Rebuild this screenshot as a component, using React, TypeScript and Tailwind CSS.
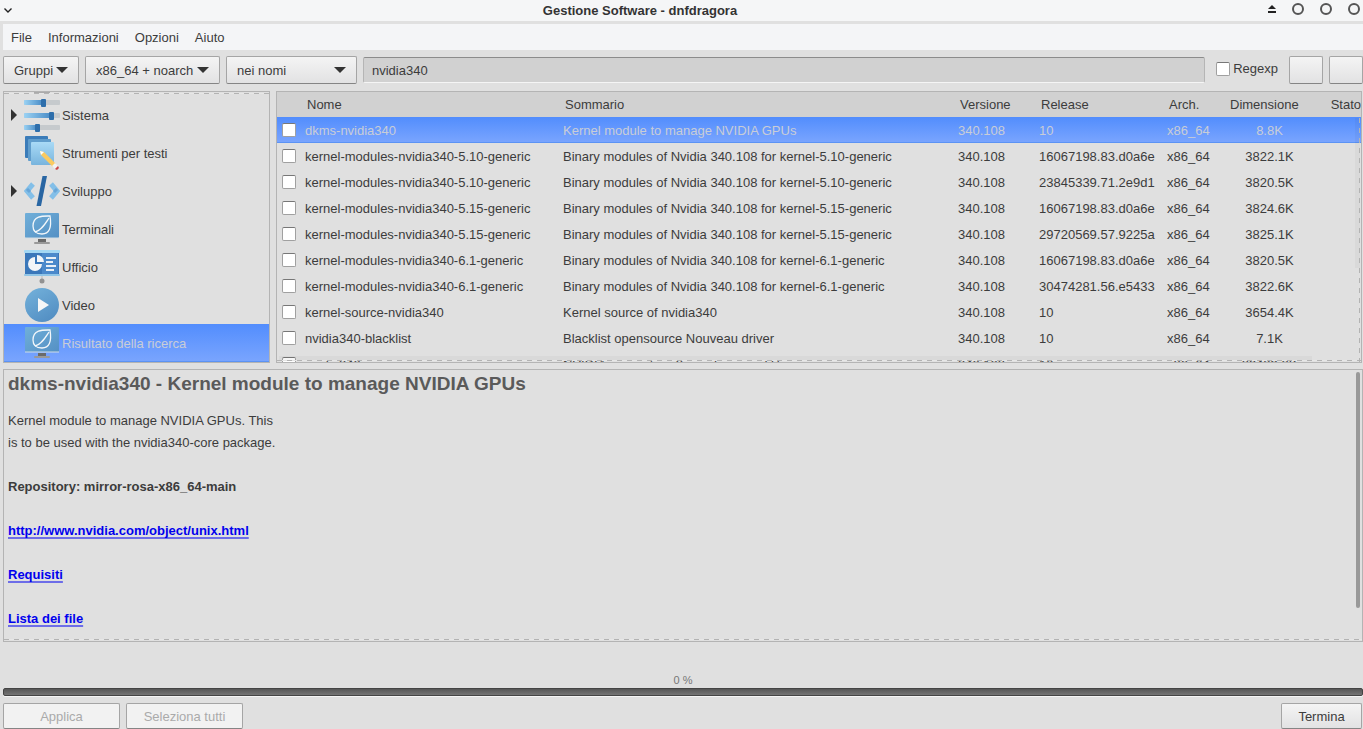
import type { ReactNode } from 'react';

const packages = [
  ['dkms-nvidia340', 'Kernel module to manage NVIDIA GPUs', '10', '8.8K'],
  ['kernel-modules-nvidia340-5.10-generic', 'Binary modules of Nvidia 340.108 for kernel-5.10-generic', '16067198.83.d0a6e', '3822.1K'],
  ['kernel-modules-nvidia340-5.10-generic', 'Binary modules of Nvidia 340.108 for kernel-5.10-generic', '23845339.71.2e9d1', '3820.5K'],
  ['kernel-modules-nvidia340-5.15-generic', 'Binary modules of Nvidia 340.108 for kernel-5.15-generic', '16067198.83.d0a6e', '3824.6K'],
  ['kernel-modules-nvidia340-5.15-generic', 'Binary modules of Nvidia 340.108 for kernel-5.15-generic', '29720569.57.9225a', '3825.1K'],
  ['kernel-modules-nvidia340-6.1-generic', 'Binary modules of Nvidia 340.108 for kernel-6.1-generic', '16067198.83.d0a6e', '3820.5K'],
  ['kernel-modules-nvidia340-6.1-generic', 'Binary modules of Nvidia 340.108 for kernel-6.1-generic', '30474281.56.e5433', '3822.6K'],
  ['kernel-source-nvidia340', 'Kernel source of nvidia340', '10', '3654.4K'],
  ['nvidia340-blacklist', 'Blacklist opensource Nouveau driver', '10', '7.1K'],
  ['nvidia340', 'NVIDIA proprietary X.org driver and libraries', '10', '39429.2K'],
];

const SlidersIcon = () => (
  <svg width="36" height="38" viewBox="0 0 36 38">
    <defs>
      <linearGradient id="track">
        <stop offset="0" stopColor="#9bd2f3" />
        <stop offset="1" stopColor="#4b8ec8" />
      </linearGradient>
    </defs>
    {[[4, 18], [17, 26], [29, 12]].map(([y, x]) => (
      <g key={y}>
        <rect x="0" y={y} width="36" height="5" rx="1" fill="#c6cacd" />
        <rect x="0" y={y} width={x} height="5" rx="1" fill="url(#track)" />
        <rect x={x - 1} y={y - 1} width="5" height="8" rx="1" fill="#2d6eab" />
      </g>
    ))}
  </svg>
);

const TextToolsIcon = () => (
  <svg width="36" height="38" viewBox="0 0 36 38">
    <defs>
      <linearGradient id="sheet" x2="0" y2="1">
        <stop offset="0" stopColor="#a9daf6" />
        <stop offset="1" stopColor="#78b4dd" />
      </linearGradient>
    </defs>
    <rect x="1" y="2" width="23" height="22" rx="1" fill="#3b7cb9" />
    <rect x="4" y="5" width="23" height="22" rx="1" fill="#609dcc" />
    <rect x="7" y="8" width="23" height="23" rx="1" fill="url(#sheet)" />
    <path d="M16 17 L20 18 L32 30 L29 33 L17 21 Z" fill="#fbca60" />
    <path d="M16 17 L20 18 L17 21 Z" fill="#fff" />
    <path d="M28 32 L31 29 L34 32 L31 35 Z" fill="#f2f2f2" />
    <path d="M31 35 L34 32 L35 34 L33 36 Z" fill="#ce4848" />
  </svg>
);

const CodeIcon = () => (
  <svg width="36" height="38" viewBox="0 0 36 38" fill="none">
    <path d="M9 12 L3 19 L9 26" stroke="#83bfe8" strokeWidth="5" />
    <path d="M27 12 L33 19 L27 26" stroke="#83bfe8" strokeWidth="5" />
    <path d="M3 17 L6 20 M33 17 L30 20" stroke="#68a6d8" strokeWidth="3" />
    <path d="M18.5 4 H23 L17 34 H12.5 Z" fill="#2966a3" />
  </svg>
);

const TerminalIcon = () => (
  <svg width="36" height="38" viewBox="0 0 36 38" fill="none">
    <defs>
      <linearGradient id="screen" x2="1" y2="1">
        <stop offset="0" stopColor="#70afd9" />
        <stop offset="1" stopColor="#5490c4" />
      </linearGradient>
    </defs>
    <rect x="1" y="3" width="34" height="25" rx="1" fill="url(#screen)" />
    <path d="M1 28 H35" stroke="#d1dde5" />
    <path d="M26 6 C20 6 9 5 9 16 C9 22 13 24 18 24 C25 24 28 18 26 6 Z" stroke="#f3f7fa" strokeWidth="1.3" />
    <path d="M11 22 C17 21 21 14 25 8" stroke="#f3f7fa" strokeWidth="1.3" />
    <path d="M14 29 H22 V32 H14 Z" fill="#6a6a6a" />
    <rect x="10" y="32" width="16" height="2" rx="1" fill="#999" />
  </svg>
);

const OfficeIcon = () => (
  <svg width="36" height="38" viewBox="0 0 36 38">
    <rect x="1" y="3" width="34" height="24" fill="#3a77ba" />
    <rect x="18" y="4" width="16" height="22" fill="#4b89cb" />
    <rect x="0" y="2" width="36" height="3" rx="1" fill="#a3d7f3" />
    <rect x="0" y="26" width="36" height="2" rx="1" fill="#90c5e7" />
    <path d="M11 9 V16 H18 A7 7 0 1 1 11 9 Z" fill="#f2f5f8" />
    <path d="M13 7 A7 7 0 0 1 20 14 H13 Z" fill="#f2f5f8" />
    <path d="M22 10 H32 M22 14 H29 M22 18 H32 M22 22 H30" stroke="#e8eff6" strokeWidth="2" />
    <path d="M18 28 V31" stroke="#bbb" />
    <circle cx="18" cy="33" r="2.5" fill="#929292" />
  </svg>
);

const VideoIcon = () => (
  <svg width="36" height="38" viewBox="0 0 36 38">
    <defs>
      <linearGradient id="disc" x2="0.6" y2="1">
        <stop offset="0" stopColor="#74b2db" />
        <stop offset="1" stopColor="#5490c4" />
      </linearGradient>
    </defs>
    <circle cx="18" cy="19" r="17" fill="url(#disc)" />
    <path d="M14 12 L25 19 L14 26 Z" fill="#f5f6f7" />
  </svg>
);

const groups: { label: string; icon: ReactNode; expandable?: boolean; selected?: boolean }[] = [
  { label: 'Sistema', icon: <SlidersIcon />, expandable: true },
  { label: 'Strumenti per testi', icon: <TextToolsIcon /> },
  { label: 'Sviluppo', icon: <CodeIcon />, expandable: true },
  { label: 'Terminali', icon: <TerminalIcon /> },
  { label: 'Ufficio', icon: <OfficeIcon /> },
  { label: 'Video', icon: <VideoIcon /> },
  { label: 'Risultato della ricerca', icon: <TerminalIcon />, selected: true },
];

const field =
  'h-7 appearance-none rounded-[2px] border border-[#a5a5a5] border-b-[#858585] bg-linear-to-b from-[#f4f4f4] to-[#e2e2e3] text-[13px] text-[#3c3c3c]';
const footerButton = 'h-[26px] rounded-[2px] border border-[#a5a5a5] border-b-[#858585] pt-[2px]';
const checkbox =
  'block size-[14px] shrink-0 appearance-none rounded-[2px] border border-[#a0a0a0] border-t-[#777] bg-white checked:bg-[#5b93fc]';
const selectedRow = 'bg-linear-to-b from-[#528dfd] to-[#7aa5fe] text-[#c9cdd6] shadow-[inset_0_-1px_#5c93f4]';
const dashX =
  'pointer-events-none absolute inset-x-0 h-px bg-[repeating-linear-gradient(90deg,#b3b3b3_0_5px,#e6e6e6_5px_10px)]';

const Select = ({ label, value, className }: { label: string; value: string; className: string }) => (
  <div className="relative shrink-0">
    <select aria-label={label} className={`${field} px-[10px] pt-[2px] ${className}`}>
      <option>{value}</option>
    </select>
    <svg className="pointer-events-none absolute top-[11px] right-[11px]" width="12" height="6" viewBox="0 0 12 6">
      <path d="M0 0 H12 L6 6 Z" fill="#333" />
    </svg>
  </div>
);

const TitleBar = () => (
  <header className="flex h-[21px] items-center bg-[#f5f6f7] pr-[3px] pl-1">
    <button aria-label="Menu finestra">
      <svg width="8" height="5" viewBox="0 0 8 5" fill="none">
        <path d="M0.5 0.5 L4 4 L7.5 0.5" stroke="#222" strokeWidth="1.4" />
      </svg>
    </button>
    <h1 className="flex-1 text-center text-[13px] font-bold text-[#333]">Gestione Software - dnfdragora</h1>
    <div className="flex items-center gap-4 pb-[3px]">
      <button aria-label="Arrotola">
        <svg width="8" height="8" viewBox="0 0 8 8">
          <path d="M4 0 L8 4 H0 Z M0 6 H8 V8 H0 Z" fill="#222" />
        </svg>
      </button>
      {['Minimizza', 'Massimizza', 'Chiudi'].map((name) => (
        <button key={name} aria-label={name} className="size-3 rounded-full border-2 border-[#555]" />
      ))}
    </div>
  </header>
);

const GroupList = () => (
  <nav className="relative w-[267px] shrink-0 overflow-hidden border border-[#b4b4b4] pt-1">
    <div className="absolute top-0 left-[30px] h-[2px] w-4 bg-[#aaa]" />
    <ul>
      {groups.map(({ label, icon, expandable, selected }) => (
        <li key={label} className={`flex h-[38px] items-center pl-[7px] ${selected ? selectedRow : ''}`}>
          <svg width="6" height="12" viewBox="0 0 6 12" className="mr-[7px] shrink-0">
            {expandable && <path d="M0 0 L6 6 L0 12 Z" fill="#333" />}
          </svg>
          {icon}
          <span className="pt-[2px] pl-[2px]">{label}</span>
        </li>
      ))}
    </ul>
    <div className={`${dashX} top-px`} />
  </nav>
);

const PackageTable = () => (
  <section className="relative min-w-0 flex-1 overflow-hidden border border-[#b4b4b4]">
    <table className="w-full table-fixed whitespace-nowrap">
      <colgroup>
        <col className="w-[25px]" />
        <col className="w-[258px]" />
        <col />
        <col className="w-[81px]" />
        <col className="w-[128px]" />
        <col className="w-[61px]" />
        <col className="w-[86px]" />
        <col className="w-[50px]" />
      </colgroup>
      <thead>
        <tr className="h-[25px] bg-[#d1d1d1] text-left">
          {['', 'Nome', 'Sommario', 'Versione', 'Release', 'Arch.', 'Dimensione', 'Stato'].map((title) => (
            <th key={title} className="p-0 pl-[5px] font-normal last:text-right">
              {title}
            </th>
          ))}
        </tr>
      </thead>
      <tbody>
        {packages.map(([name, summary, release, size], i) => (
          <tr key={i} className={`h-[26px] *:pt-[2px] *:pl-[3px] ${i === 0 ? selectedRow : ''}`}>
            <td>
              <input type="checkbox" aria-label={name} className={`${checkbox} mb-[2px] ml-[2px]`} />
            </td>
            <td>{name}</td>
            <td>{summary}</td>
            <td>340.108</td>
            <td>{release}</td>
            <td>x86_64</td>
            <td className="text-center">{size}</td>
            <td />
          </tr>
        ))}
      </tbody>
    </table>
    <div className="pointer-events-none absolute right-[49px] bottom-px left-[2px] h-[5px] bg-black/3" />
    <div className="pointer-events-none absolute top-[26px] right-px h-[150px] w-[5px] bg-black/3" />
    <div className={`${dashX} bottom-px`} />
    <div className="pointer-events-none absolute top-[26px] right-px bottom-0 w-px bg-[repeating-linear-gradient(180deg,#b3b3b3_0_5px,transparent_5px_10px)]" />
  </section>
);

const Details = () => (
  <article className="relative h-[273px] overflow-hidden border border-[#b4b4b4] pl-1">
    <h2 className="h-[40px] pt-[2px] text-[19px] leading-[23px] font-bold text-[#5a5a5a]">
      dkms-nvidia340 - Kernel module to manage NVIDIA GPUs
    </h2>
    <p className="leading-[22px]">
      Kernel module to manage NVIDIA GPUs. This
      <br />
      is to be used with the nvidia340-core package.
    </p>
    <div className="flex flex-col items-start gap-[22px] pt-[22px] leading-[22px] font-bold">
      <p>Repository: mirror-rosa-x86_64-main</p>
      {['http://www.nvidia.com/object/unix.html', 'Requisiti', 'Lista dei file'].map((link) => (
        <a
          key={link}
          href="#"
          className="text-[#0000ee] underline decoration-[#6d6de8] decoration-2 underline-offset-2 [text-decoration-skip-ink:none]"
        >
          {link}
        </a>
      ))}
    </div>
    <div className="absolute top-[2px] right-[2px] h-[236px] w-1 rounded-full bg-[#999]" />
    <div className={`${dashX} bottom-px`} />
  </article>
);

const App = () => {
  return (
    <div className="flex min-h-screen flex-col overflow-hidden bg-[#e0e0e0] font-['Liberation_Sans',Arial,sans-serif] text-[13px] leading-4 text-[#3c3c3c]">
      <TitleBar />
      <div className="flex flex-1 flex-col pt-[3px] pl-[3px]">
        <nav className="flex h-[26px] items-center gap-4 bg-[#f4f5f7] px-2 pt-[2px]">
          {['File', 'Informazioni', 'Opzioni', 'Aiuto'].map((item) => (
            <button key={item}>{item}</button>
          ))}
        </nav>

        <div className="flex items-center gap-[6px] pt-[6px] pb-[7px]">
          <Select label="Vista" value="Gruppi" className="w-[76px]" />
          <Select label="Architettura" value="x86_64 + noarch" className="w-[135px]" />
          <Select label="Cerca in" value="nei nomi" className="w-[131px]" />
          <input
            aria-label="Testo da cercare"
            defaultValue="nvidia340"
            className="h-[26px] min-w-0 flex-1 rounded-[2px] border border-[#b5b5b5] border-t-[#8c8c8c] border-b-[#f5f5f5] bg-[#d1d1d1] px-2 outline-none"
          />
          <label className="flex items-center gap-[3px] pr-[5px] pb-[3px] pl-[5px]">
            <input type="checkbox" className={checkbox} />
            Regexp
          </label>
          <button aria-label="Cerca" className={`${field} w-[34px]`} />
          <button aria-label="Azzera" className={`${field} w-[34px]`} />
        </div>

        <div className="flex h-[272px] gap-[6px] pr-px">
          <GroupList />
          <PackageTable />
        </div>

        <div className="pt-[6px]">
          <Details />
        </div>

        <div className="mt-auto">
          <p className="text-center text-[11px] leading-4 text-[#777]">0 %</p>
          <div
            role="progressbar"
            aria-label="Avanzamento"
            aria-valuenow={0}
            className="h-2 rounded-[2px] border border-[#444] bg-linear-to-b from-[#565656] to-[#757575] shadow-[0_1px_#f5f5f5]"
          />
        </div>
        <footer className="flex gap-[6px] pt-[7px] pr-px">
          <button disabled className={`${footerButton} w-[117px] bg-[#f2f2f2] text-[#aaa]`}>
            Applica
          </button>
          <button disabled className={`${footerButton} w-[117px] bg-[#f2f2f2] text-[#aaa]`}>
            Seleziona tutti
          </button>
          <button className={`${footerButton} ml-auto w-[81px] bg-linear-to-b from-[#f4f4f4] to-[#e2e2e3]`}>
            Termina
          </button>
        </footer>
      </div>
    </div>
  );
};

export default App;
